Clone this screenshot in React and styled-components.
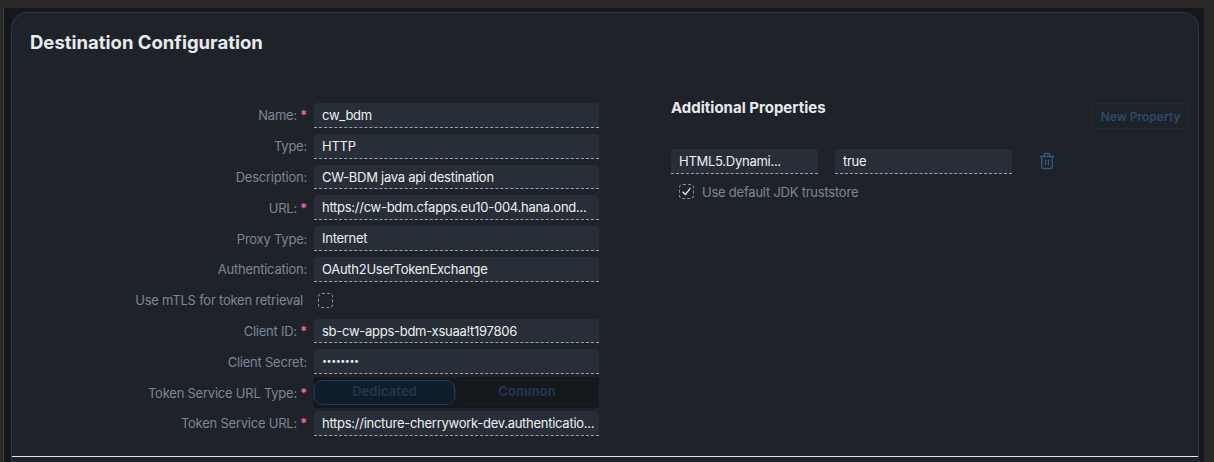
import React from "react";
import styled, { createGlobalStyle } from "styled-components";
import { Trash2 } from "lucide-react";

const GlobalStyle = createGlobalStyle`
  html, body {
    margin: 0;
    padding: 0;
    background: #2a2927;
    font-family: Inter, "Noto Sans", "Liberation Sans", sans-serif;
  }
`;

const Page = styled.div`
  width: 1214px;
  height: 462px;
  box-sizing: border-box;
  padding: 8px 10px 0 3px;
  overflow: hidden;
`;

const Backdrop = styled.div`
  height: 100%;
  box-sizing: border-box;
  background: #14181d;
  border-left: 1px solid #3d3e40;
  padding: 4px 5px 0 7px;
`;

const Card = styled.section`
  height: 450px;
  box-sizing: border-box;
  background: #1e232a;
  border: 1px solid #30363d;
  border-bottom: 0;
  border-radius: 16px 16px 0 0;
`;

const Body = styled.div`
  height: 444px;
  box-sizing: border-box;
  border-bottom: 1px solid #e4e6e8;
  padding: 19px 9px 0 18px;
`;

const Title = styled.h1`
  margin: 0;
  height: 20px;
  font-size: 18.5px;
  line-height: 20px;
  font-weight: 700;
  color: #e8eaec;
`;

const Columns = styled.div`
  display: flex;
  margin-top: 51px;
`;

const Form = styled.div`
  width: 569px;
  display: flex;
  flex-direction: column;
  gap: 6px;
`;

const Row = styled.div`
  display: flex;
  align-items: center;
  height: 24.8px;
`;

const Label = styled.label`
  width: 284px;
  flex: none;
  box-sizing: border-box;
  padding-right: ${(p) => p.$inset || 7}px;
  text-align: right;
  font-size: 13px;
  letter-spacing: -0.23px;
  color: #7b8794;
  white-space: nowrap;
`;

const Star = styled.span`
  color: #e8689f;
  margin-left: 3px;
  font-size: 13px;
  font-weight: 700;
`;

const Input = styled.div`
  width: ${(p) => p.$width || 285}px;
  height: 24.8px;
  flex: none;
  box-sizing: border-box;
  padding: 0 8px;
  background: #272e37;
  border-bottom: 1px dashed #9aa3ad;
  border-radius: 4px 4px 0 0;
  font-size: 13px;
  line-height: 24px;
  color: #eef0f2;
  letter-spacing: -0.27px;
  white-space: nowrap;
  overflow: hidden;
`;

const Dots = styled(Input)`
  font-size: 9px;
  letter-spacing: -0.5px;
`;

const Segmented = styled.div`
  width: 285px;
  height: 30.8px;
  margin: -3px 0;
  flex: none;
  display: flex;
  align-items: center;
  background: #14181c;
`;

const Segment = styled.div`
  flex: ${(p) => (p.$active ? "0 0 141px" : "1")};
  height: 24.8px;
  box-sizing: border-box;
  border: 1px solid ${(p) => (p.$active ? "#1e3a55" : "#1c2126")};
  border-radius: 8px;
  background: ${(p) => (p.$active ? "#0e1d2b" : "transparent")};
  text-align: center;
  font-size: 13px;
  line-height: 21px;
  font-weight: 700;
  color: #21354c;
`;

const Check = styled.span`
  width: 15px;
  height: 15px;
  flex: none;
  box-sizing: border-box;
  display: inline-flex;
  align-items: center;
  justify-content: center;
  margin-left: ${(p) => p.$offset || 0}px;
  border: 1px dashed #8a929b;
  border-radius: 4px;
`;

const Side = styled.div`
  flex: 1;
  padding-left: 72px;
`;

const SideHeader = styled.div`
  display: flex;
  justify-content: space-between;
  height: 46px;
`;

const SideTitle = styled.h2`
  margin: -4px 0 0;
  font-size: 15px;
  line-height: 18px;
  font-weight: 700;
  color: #e8eaec;
`;

const NewButton = styled.button`
  height: 26px;
  padding: 0 7.5px;
  background: transparent;
  border: 1px solid #232c37;
  border-radius: 6px;
  font: 600 12px Inter, "Noto Sans", sans-serif;
  color: #2c4a6b;
`;

const PropertyRow = styled.div`
  display: flex;
  align-items: center;
  gap: 17px;
`;

const DeleteIcon = styled(Trash2)`
  color: #2f5a86;
  margin-left: 9px;
`;

const CheckRow = styled.div`
  display: flex;
  align-items: center;
  gap: 8px;
  margin: 10px 0 0 8px;
  font-size: 13px;
  letter-spacing: -0.23px;
  color: #7b8794;
`;

const fields = [
  { label: "Name:", value: "cw_bdm", required: true },
  { label: "Type:", value: "HTTP" },
  { label: "Description:", value: "CW-BDM java api destination" },
  { label: "URL:", value: "https://cw-bdm.cfapps.eu10-004.hana.ond...", required: true },
  { label: "Proxy Type:", value: "Internet" },
  { label: "Authentication:", value: "OAuth2UserTokenExchange" },
];

const Field = ({ label, value, required }) => (
  <Row>
    <Label>
      {label}
      {required && <Star>*</Star>}
    </Label>
    <Input>{value}</Input>
  </Row>
);

const App = () => (
  <Page>
    <GlobalStyle />
    <Backdrop>
      <Card>
        <Body>
          <Title>Destination Configuration</Title>
          <Columns>
            <Form>
              {fields.map((f) => (
                <Field key={f.label} {...f} />
              ))}
              <Row>
                <Label $inset={11}>Use mTLS for token retrieval</Label>
                <Check $offset={4} />
              </Row>
              <Field label="Client ID:" value="sb-cw-apps-bdm-xsuaa!t197806" required />
              <Row>
                <Label>Client Secret:</Label>
                <Dots>••••••••</Dots>
              </Row>
              <Row>
                <Label>
                  Token Service URL Type:<Star>*</Star>
                </Label>
                <Segmented>
                  <Segment $active>Dedicated</Segment>
                  <Segment>Common</Segment>
                </Segmented>
              </Row>
              <Field label="Token Service URL:" value="https://incture-cherrywork-dev.authenticatio..." required />
            </Form>
            <Side>
              <SideHeader>
                <SideTitle>Additional Properties</SideTitle>
                <NewButton>New Property</NewButton>
              </SideHeader>
              <PropertyRow>
                <Input $width={147}>HTML5.Dynami...</Input>
                <Input $width={177}>true</Input>
                <DeleteIcon size={18} strokeWidth={1.75} />
              </PropertyRow>
              <CheckRow>
                <Check>
                  <svg width="11" height="11" viewBox="0 0 10 10" fill="none" stroke="#e8eaec" strokeWidth="1.2">
                    <path d="M1.5 5.2 L4 7.8 L8.6 2" />
                  </svg>
                </Check>
                Use default JDK truststore
              </CheckRow>
            </Side>
          </Columns>
        </Body>
      </Card>
    </Backdrop>
  </Page>
);

export default App;
